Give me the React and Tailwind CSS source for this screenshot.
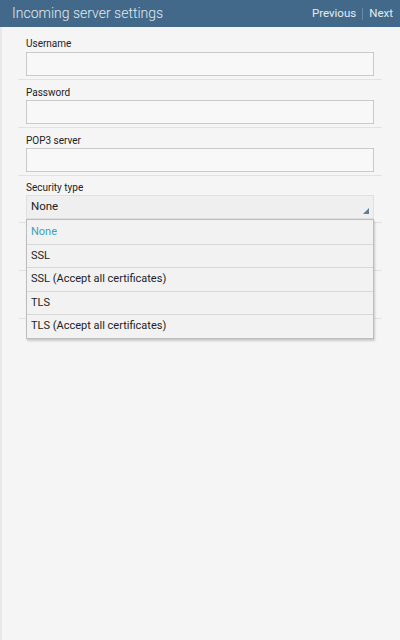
import React from 'react';

const fields = ['Username', 'Password', 'POP3 server'];
const options = ['None', 'SSL', 'SSL (Accept all certificates)', 'TLS', 'TLS (Accept all certificates)'];

function TextRow({ label, first }) {
  return (
    <div className={`border-b border-[#e2e2e2] px-2 pb-[3px] ${first ? 'pt-2' : 'pt-1'}`}>
      <div className={`${first ? 'h-[17px]' : 'h-4'} flex items-center text-[10px] text-[#222]`}>{label}</div>
      <div className="h-6 border border-[#c9c9c9] bg-[#f8f8f8]" />
    </div>
  );
}

// rows hidden behind the open list
function HiddenRow() {
  return (
    <div className="border-b border-[#e2e2e2] px-2 pt-1 pb-[3px]">
      <div className="h-4" />
      <div className="h-6" />
    </div>
  );
}

export default function App() {
  return (
    <div className="min-h-[640px] bg-[#f5f5f5] border-l-2 border-[#e9e9e9] font-['Roboto',sans-serif]">
      {/* Header */}
      <div className="-ml-[2px] h-[27px] bg-[#42698a] flex items-center justify-between pl-3 pr-[7px]">
        <span className="text-[14px] font-light text-[#e2eaf0]">Incoming server settings</span>
        <div className="flex items-center text-[11.5px] text-[#e4ecf2]">
          <span>Previous</span>
          <span className="mx-[6px] h-3 w-px bg-[#6a8aa4]" />
          <span>Next</span>
        </div>
      </div>

      <div className="pl-[16px] pr-[18px]">
        {fields.map((f, i) => (
          <TextRow key={f} label={f} first={i === 0} />
        ))}

        {/* Security type */}
        <div className="border-b border-[#e2e2e2] px-2 pt-1 pb-[3px]">
          <div className="h-[15px] flex items-center text-[10px] text-[#222]">Security type</div>
          <div className="relative">
            <div className="h-6 border border-[#e0e0e0] bg-[#efefef] flex items-center pl-[4px] text-[11.5px] text-[#222]">
              None
              <svg className="absolute right-[5px] bottom-[5px]" width="6" height="6" viewBox="0 0 6 6">
                <polygon points="6,0 6,6 0,6" fill="#5d7f96" />
              </svg>
            </div>
            {/* Dropdown list */}
            <div className="absolute left-0 right-0 top-full z-10 border border-[#bdbdbd] bg-[#f2f2f2] shadow-[1px_2px_2px_rgba(0,0,0,0.18)]">
              {options.map((o, i) => (
                <div
                  key={o}
                  className={`h-[23.5px] flex items-center pl-[4px] text-[11px] ${i > 0 ? 'border-t border-[#d8d8d8]' : ''} ${i === 0 ? 'text-[#3f9fc0]' : 'text-[#222]'}`}
                >
                  {o}
                </div>
              ))}
            </div>
          </div>
        </div>

        <HiddenRow />
        <HiddenRow />
      </div>
    </div>
  );
}
